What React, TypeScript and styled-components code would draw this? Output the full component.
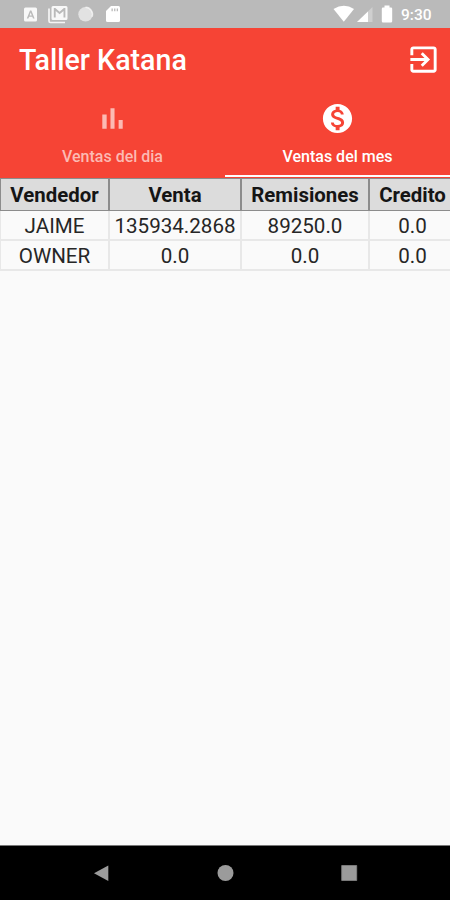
import React from "react";
import styled, { createGlobalStyle } from "styled-components";

const GlobalStyle = createGlobalStyle`
  * { box-sizing: border-box; }
  body { margin: 0; font-family: Roboto, sans-serif; background: #fafafa; }
`;

const Screen = styled.div`
  width: 450px;
  height: 900px;
  display: flex;
  flex-direction: column;
  overflow: hidden;
  background: #fafafa;
`;

const StatusBar = styled.header`
  height: 28px;
  flex: none;
  display: flex;
  align-items: center;
  justify-content: space-between;
  background: #bababa;
`;

const StatusIcons = styled.svg`
  display: block;
  height: 28px;
`;

const StatusRight = styled.div`
  display: flex;
  align-items: center;
  width: 120px;
`;

const Clock = styled.time`
  color: #fff;
  font-size: 15.5px;
  line-height: 28px;
  font-weight: 500;
  padding-top: 1px;
`;

const AppBar = styled.div`
  height: 64px;
  flex: none;
  display: flex;
  align-items: center;
  justify-content: space-between;
  padding: 0 9.5px 1px 19px;
  background: #f64435;
`;

const Title = styled.h1`
  margin: 0;
  color: #fff;
  font-size: 28.6px;
  line-height: 32px;
  font-weight: 500;
`;

const IconButton = styled.button`
  display: flex;
  padding: 0;
  border: 0;
  background: none;
`;

const Icon = styled.svg<{ $size: number }>`
  display: block;
  width: ${(p) => p.$size}px;
  height: ${(p) => p.$size}px;
  fill: currentColor;
`;

const Tabs = styled.nav`
  height: 86px;
  flex: none;
  display: grid;
  grid-template-columns: 1fr 1fr;
  background: #f64435;
`;

const Tab = styled.button<{ $active?: boolean }>`
  display: flex;
  flex-direction: column;
  align-items: center;
  gap: 10px;
  padding: 9px 0 0;
  border: 0;
  border-bottom: 2px solid ${(p) => (p.$active ? "#fff" : "transparent")};
  margin-bottom: 1px;
  background: none;
  color: ${(p) => (p.$active ? "#fff" : "#fcbab3")};
  font: 500 16px/22px Roboto, sans-serif;
`;

const Content = styled.main`
  flex: 1;
`;

const Table = styled.table`
  width: 457px;
  table-layout: fixed;
  border-collapse: separate;
  border-spacing: 0;
  text-align: center;
`;

const HeadCell = styled.th`
  height: 33px;
  padding: 1px 0 0;
  background: #dcdcdc;
  border: solid #8c8c8c;
  border-width: 1px 2px 1px 0;
  color: #151515;
  font-size: 20.4px;
  line-height: 30px;
  font-weight: 700;
  &:first-child { border-left-width: 1px; }
`;

const Cell = styled.td`
  height: 30px;
  padding: 3px 0 0;
  border: solid #e8e8e8;
  border-width: 0 2px 2px 0;
  color: #262626;
  font-size: 20.6px;
  line-height: 25px;
  &:first-child { border-left-width: 1px; }
`;

const NavBar = styled.footer`
  height: 55px;
  flex: none;
  border-top: 1px solid #777;
  background: #000;
`;

const columns = [
  { name: "Vendedor", width: 110 },
  { name: "Venta", width: 132 },
  { name: "Remisiones", width: 128 },
  { name: "Credito", width: 87 },
];

const rows = [
  ["JAIME", "135934.2868", "89250.0", "0.0"],
  ["OWNER", "0.0", "0.0", "0.0"],
];

export default function App() {
  return (
    <>
      <GlobalStyle />
      <Screen>
        <StatusBar>
          <StatusIcons width="130" viewBox="0 0 130 28" fill="#fff">
            <path fillRule="evenodd" d="M25.5 7.500h10q1.500 0 1.500 1.500v11q0 1.500-1.500 1.500h-10q-1.500 0-1.500-1.500v-11Q24 7.500 25.500 7.500zM30 10.500l-3.200 8h1.600l.7-1.800h3.200l.7 1.800h1.600l-3.200-8zm.7 2 1.100 2.900h-2.200z" fillOpacity=".9" />
            <path fillRule="evenodd" d="M53 6h13q1.500 0 1.500 1.500v11Q67.500 20 66 20H53q-1.500 0-1.500-1.500v-11Q51.500 6 53 6zm.8 2v9.500h1.900V11l3.900 3.200 3.900-3.200v6.500h1.900V8h-1.500l-4.300 3.700L55.300 8z" fillOpacity=".9" />
            <path d="M49 8.500V21q0 1.500 1.500 1.500H65" fill="none" stroke="#fff" strokeWidth="1.700" strokeOpacity=".85" />
            <circle cx="85.500" cy="14.300" r="7.200" fillOpacity=".58" />
            <path d="M85.500 7.300a7 7 0 0 1 6.500 9.500" fill="none" stroke="#fff" strokeWidth="1.600" strokeOpacity=".6" />
            <path d="M111 6h7.500q1.500 0 1.500 1.500v13q0 1.500-1.500 1.500h-11q-1.500 0-1.500-1.500V11z" />
            <path d="M111.500 8.500h1.300v2.800h-1.300zm2.600 0h1.300v2.800h-1.300zm2.600 0h1.300v2.800h-1.300z" fill="#bababa" />
          </StatusIcons>
          <StatusRight>
            <StatusIcons width="71" viewBox="330 0 71 28" fill="#fff">
              <path d="M333.500 9q10.500-6.500 20.500 0l-10.200 12.700z" />
              <path d="M372.500 7v15H357z" fillOpacity=".3" />
              <path d="M368 11.500V22h-11z" />
              <path d="M384.500 5.500h5v2h1.500q1.200 0 1.200 1.200v12.500q0 1.200-1.200 1.200h-8q-1.200 0-1.200-1.200V8.700q0-1.200 1.200-1.200h1.500z" />
            </StatusIcons>
            <Clock>9:30</Clock>
          </StatusRight>
        </StatusBar>
        <AppBar>
          <Title>Taller Katana</Title>
          <IconButton aria-label="Salir">
            <Icon $size={35} viewBox="0 0 24 24" color="#fff">
              <path d="M10.090 15.590 11.500 17l5-5-5-5-1.410 1.410L12.670 11H3v2h9.670l-2.580 2.590zM19 3H5c-1.110 0-2 .9-2 2v4h2V5h14v14H5v-4H3v4c0 1.100.890 2 2 2h14c1.100 0 2-.9 2-2V5c0-1.100-.9-2-2-2z" />
            </Icon>
          </IconButton>
        </AppBar>
        <Tabs>
          <Tab>
            <Icon $size={35} viewBox="0 0 24 24">
              <path d="M5 9.200h3V19H5zM10.600 5h2.800v14h-2.800zm5.600 8H19v6h-2.800z" />
            </Icon>
            Ventas del dia
          </Tab>
          <Tab $active>
            <Icon $size={35} viewBox="0 0 24 24">
              <path d="M12 2C6.480 2 2 6.480 2 12s4.480 10 10 10 10-4.480 10-10S17.520 2 12 2zm1.410 16.090V20h-2.670v-1.930c-1.710-.36-3.160-1.460-3.270-3.400h1.960c.1 1.050.82 1.870 2.650 1.870 1.960 0 2.400-.98 2.400-1.590 0-.83-.44-1.610-2.670-2.140-2.480-.6-4.180-1.620-4.180-3.670 0-1.720 1.390-2.840 3.110-3.210V4h2.670v1.950c1.860.45 2.790 1.860 2.850 3.390H14.300c-.05-1.110-.64-1.870-2.220-1.870-1.500 0-2.400.68-2.400 1.640 0 .84.65 1.390 2.670 1.910s4.180 1.390 4.180 3.910c-.010 1.830-1.380 2.830-3.120 3.160z" />
            </Icon>
            Ventas del mes
          </Tab>
        </Tabs>
        <Content>
          <Table>
            <colgroup>
              {columns.map((c) => <col key={c.name} width={c.width} />)}
            </colgroup>
            <thead>
              <tr>{columns.map((c) => <HeadCell key={c.name}>{c.name}</HeadCell>)}</tr>
            </thead>
            <tbody>
              {rows.map((r) => (
                <tr key={r[0]}>{r.map((v, i) => <Cell key={i}>{v}</Cell>)}</tr>
              ))}
            </tbody>
          </Table>
        </Content>
        <NavBar>
          <svg width="450" height="54" viewBox="0 846 450 54" fill="#9b9b9b" display="block">
            <path d="M108.300 865.500v15.500L94 873.200z" />
            <circle cx="225.500" cy="873" r="8" />
            <path d="M341.700 865.500h15v15h-15z" stroke="#858585" strokeWidth=".8" />
          </svg>
        </NavBar>
      </Screen>
    </>
  );
}
